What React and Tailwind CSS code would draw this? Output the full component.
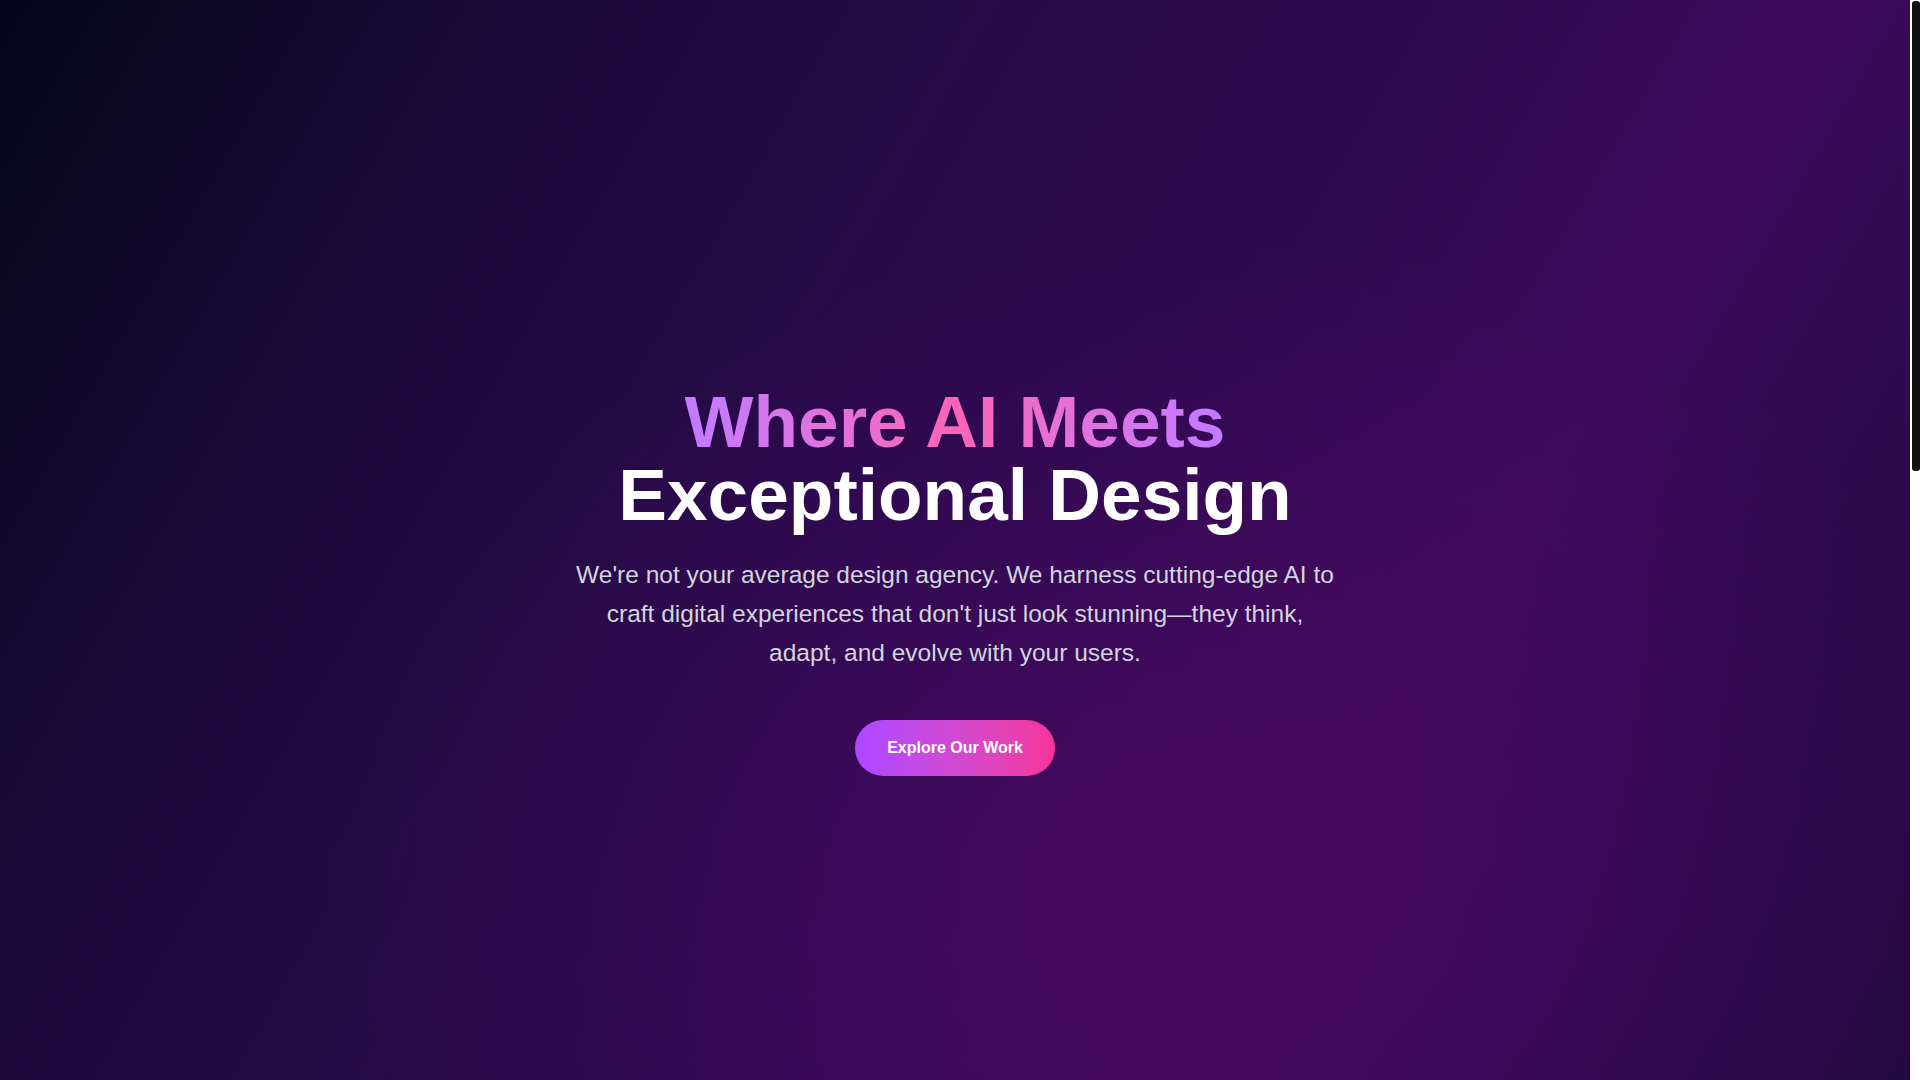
import React from "react";

export default function App() {
  return (
    <div
      className="flex min-h-screen bg-[#12061f]"
      style={{ fontFamily: '"Liberation Sans", Arial, sans-serif' }}
    >
      <main className="flex-1 min-w-0">
        <section className="min-h-screen pt-20 flex items-center justify-center bg-[radial-gradient(ellipse_45%_60%_at_62%_82%,rgba(74,8,100,0.75)_0%,rgba(74,8,100,0)_100%),linear-gradient(120deg,#04051a_0%,#150a32_16%,#230b45_35%,#2f0a4f_55%,#3c0a5a_72%,#1f0a3e_100%)]">
          <div className="flex flex-col items-center text-center px-6">
            <h1 className="text-[73px] leading-none font-bold text-white mb-6">
              <span className="bg-linear-to-r from-purple-400 via-pink-400 to-purple-400 bg-clip-text text-transparent">
                Where AI Meets
              </span>
              <br />
              Exceptional Design
            </h1>
            <p className="max-w-[762px] text-[24.5px] leading-[39px] text-gray-300">
              We're not your average design agency. We harness cutting-edge AI to craft digital experiences that don't just look stunning—they think, adapt, and evolve with your users.
            </p>
            <div className="mt-12">
              <button className="rounded-full bg-linear-to-r from-purple-500 to-pink-500 px-8 py-4 text-base font-bold text-white">
                Explore Our Work
              </button>
            </div>
          </div>
        </section>
        <section className="h-[1420px] bg-[#12061f]"></section>
      </main>
      <aside className="w-[10px] shrink-0 bg-white">
        <div className="h-screen pt-px pl-[2px]">
          <div className="h-[470px] w-[8px] rounded-[3px] bg-[#111111]"></div>
        </div>
      </aside>
    </div>
  );
}
